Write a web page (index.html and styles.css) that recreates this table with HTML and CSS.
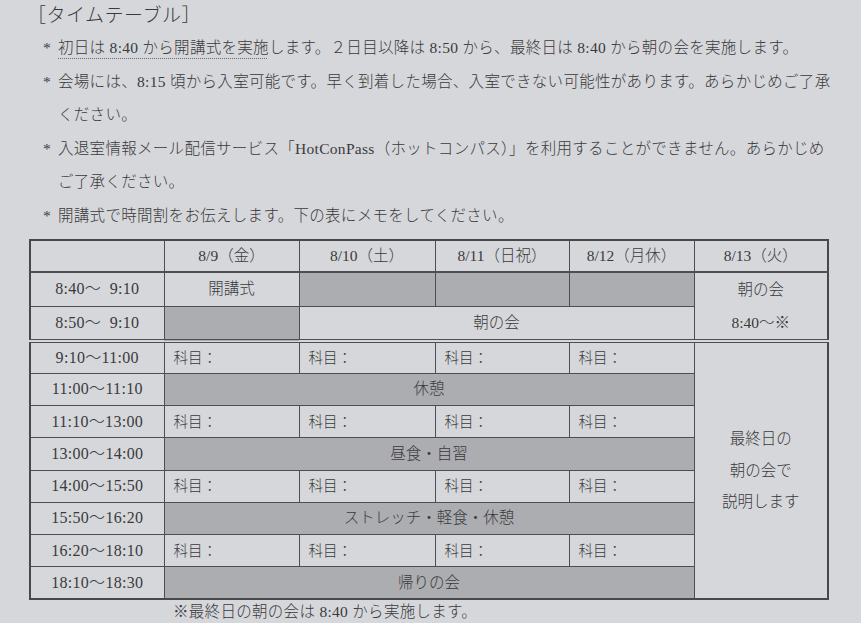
FILE: index.html
```html
<!DOCTYPE html>
<html lang="ja">
<head>
<meta charset="utf-8">
<title>タイムテーブル</title>
<link rel="stylesheet" href="styles.css">
</head>
<body>
<div class="sheet">
  <h1 class="title">［タイムテーブル］</h1>
  <ul class="notes">
    <li><span class="mark">*</span><span class="txt"><span class="ul">初日は 8:40 から開講式を実施</span>します。２日目以降は 8:50 から、最終日は 8:40 から朝の会を実施します。</span></li>
    <li><span class="mark">*</span><span class="txt">会場には、8:15 頃から入室可能です。早く到着した場合、入室できない可能性があります。あらかじめご了承<br>ください。</span></li>
    <li><span class="mark">*</span><span class="txt">入退室情報メール配信サービス「HotConPass（ホットコンパス）」を利用することができません。あらかじめ<br>ご了承ください。</span></li>
    <li><span class="mark">*</span><span class="txt">開講式で時間割をお伝えします。下の表にメモをしてください。</span></li>
  </ul>

  <table class="tt">
    <colgroup>
      <col class="c-time"><col class="c-d1"><col class="c-d2"><col class="c-d3"><col class="c-d4"><col class="c-d5">
    </colgroup>
    <tr class="head">
      <td></td>
      <td>8/9（金）</td>
      <td>8/10（土）</td>
      <td>8/11（日祝）</td>
      <td>8/12（月休）</td>
      <td>8/13（火）</td>
    </tr>
    <tr>
      <td class="time">8:40～&nbsp;&nbsp;9:10</td>
      <td class="center">開講式</td>
      <td class="grey"></td>
      <td class="grey"></td>
      <td class="grey"></td>
      <td class="center last-top" rowspan="2"><div class="stack">朝の会<br>8:40～※</div></td>
    </tr>
    <tr class="dbl">
      <td class="time">8:50～&nbsp;&nbsp;9:10</td>
      <td class="grey"></td>
      <td class="center" colspan="3">朝の会</td>
    </tr>
    <tr>
      <td class="time">9:10～11:00</td>
      <td class="subj">科目：</td>
      <td class="subj">科目：</td>
      <td class="subj">科目：</td>
      <td class="subj">科目：</td>
      <td class="center" rowspan="8"><div class="stack2">最終日の<br>朝の会で<br>説明します</div></td>
    </tr>
    <tr>
      <td class="time">11:00～11:10</td>
      <td class="grey center" colspan="4">休憩</td>
    </tr>
    <tr>
      <td class="time">11:10～13:00</td>
      <td class="subj">科目：</td>
      <td class="subj">科目：</td>
      <td class="subj">科目：</td>
      <td class="subj">科目：</td>
    </tr>
    <tr>
      <td class="time">13:00～14:00</td>
      <td class="grey center" colspan="4">昼食・自習</td>
    </tr>
    <tr>
      <td class="time">14:00～15:50</td>
      <td class="subj">科目：</td>
      <td class="subj">科目：</td>
      <td class="subj">科目：</td>
      <td class="subj">科目：</td>
    </tr>
    <tr>
      <td class="time">15:50～16:20</td>
      <td class="grey center" colspan="4">ストレッチ・軽食・休憩</td>
    </tr>
    <tr>
      <td class="time">16:20～18:10</td>
      <td class="subj">科目：</td>
      <td class="subj">科目：</td>
      <td class="subj">科目：</td>
      <td class="subj">科目：</td>
    </tr>
    <tr>
      <td class="time">18:10～18:30</td>
      <td class="grey center" colspan="4">帰りの会</td>
    </tr>
  </table>
  <p class="foot">※最終日の朝の会は 8:40 から実施します。</p>
</div>
</body>
</html>
```

FILE: styles.css
```css
* { box-sizing: border-box; }

html, body {
  margin: 0;
  padding: 0;
}

body {
  background: #d6d7da;
  color: #3a3a3d;
  font-family: "Liberation Serif", "Noto Sans CJK JP", serif;
  font-weight: 300;
  width: 861px;
  height: 623px;
  overflow: hidden;
}

.sheet {
  padding: 1px 0 0 0;
}

.title {
  margin: 0 0 0 27px;
  font-size: 19px;
  font-weight: 300;
  line-height: 30px;
  letter-spacing: 0.5px;
}

.notes {
  list-style: none;
  margin: 0;
  padding: 0 0 0 43px;
  font-size: 15.5px;
  line-height: 33.6px;
}

.notes li {
  display: flex;
  white-space: nowrap;
}

.mark {
  width: 15px;
  flex: none;
}

.txt {
  letter-spacing: 0.3px;
}

.ul {
  text-decoration: underline dotted #6a6a6e;
  text-underline-offset: 5px;
  text-decoration-thickness: 1px;
}

.tt {
  margin: 6px 0 0 29px;
  border-collapse: collapse;
  table-layout: fixed;
  width: 798px;
  border: 2px solid #48484b;
  font-size: 15.5px;
}

.c-time { width: 134px; }
.c-d1 { width: 135px; }
.c-d2 { width: 136px; }
.c-d3 { width: 134px; }
.c-d4 { width: 125px; }
.c-d5 { width: 134px; }

.tt td {
  border: 1px solid #4e4e52;
  height: 32.3px;
  padding: 0;
  vertical-align: middle;
  line-height: 20px;
}

.head td {
  text-align: center;
  border-bottom: 2px solid #4e4e52;
}

.time {
  text-align: center;
  letter-spacing: 0.3px;
  font-size: 16px;
}

.center {
  text-align: center;
}

.subj {
  text-align: left;
  padding-left: 9px !important;
  font-size: 14.5px;
}

.grey {
  background: #acadb0;
}

.dbl td {
  border-bottom: 4px double #4e4e52;
}

.last-top {
  border-bottom: 4px double #4e4e52 !important;
}

.stack {
  line-height: 33px;
}

.stack2 {
  line-height: 31.5px;
}

.foot {
  margin: 1px 0 0 173px;
  font-size: 15.5px;
  line-height: 22px;
  letter-spacing: 0.3px;
}
```
